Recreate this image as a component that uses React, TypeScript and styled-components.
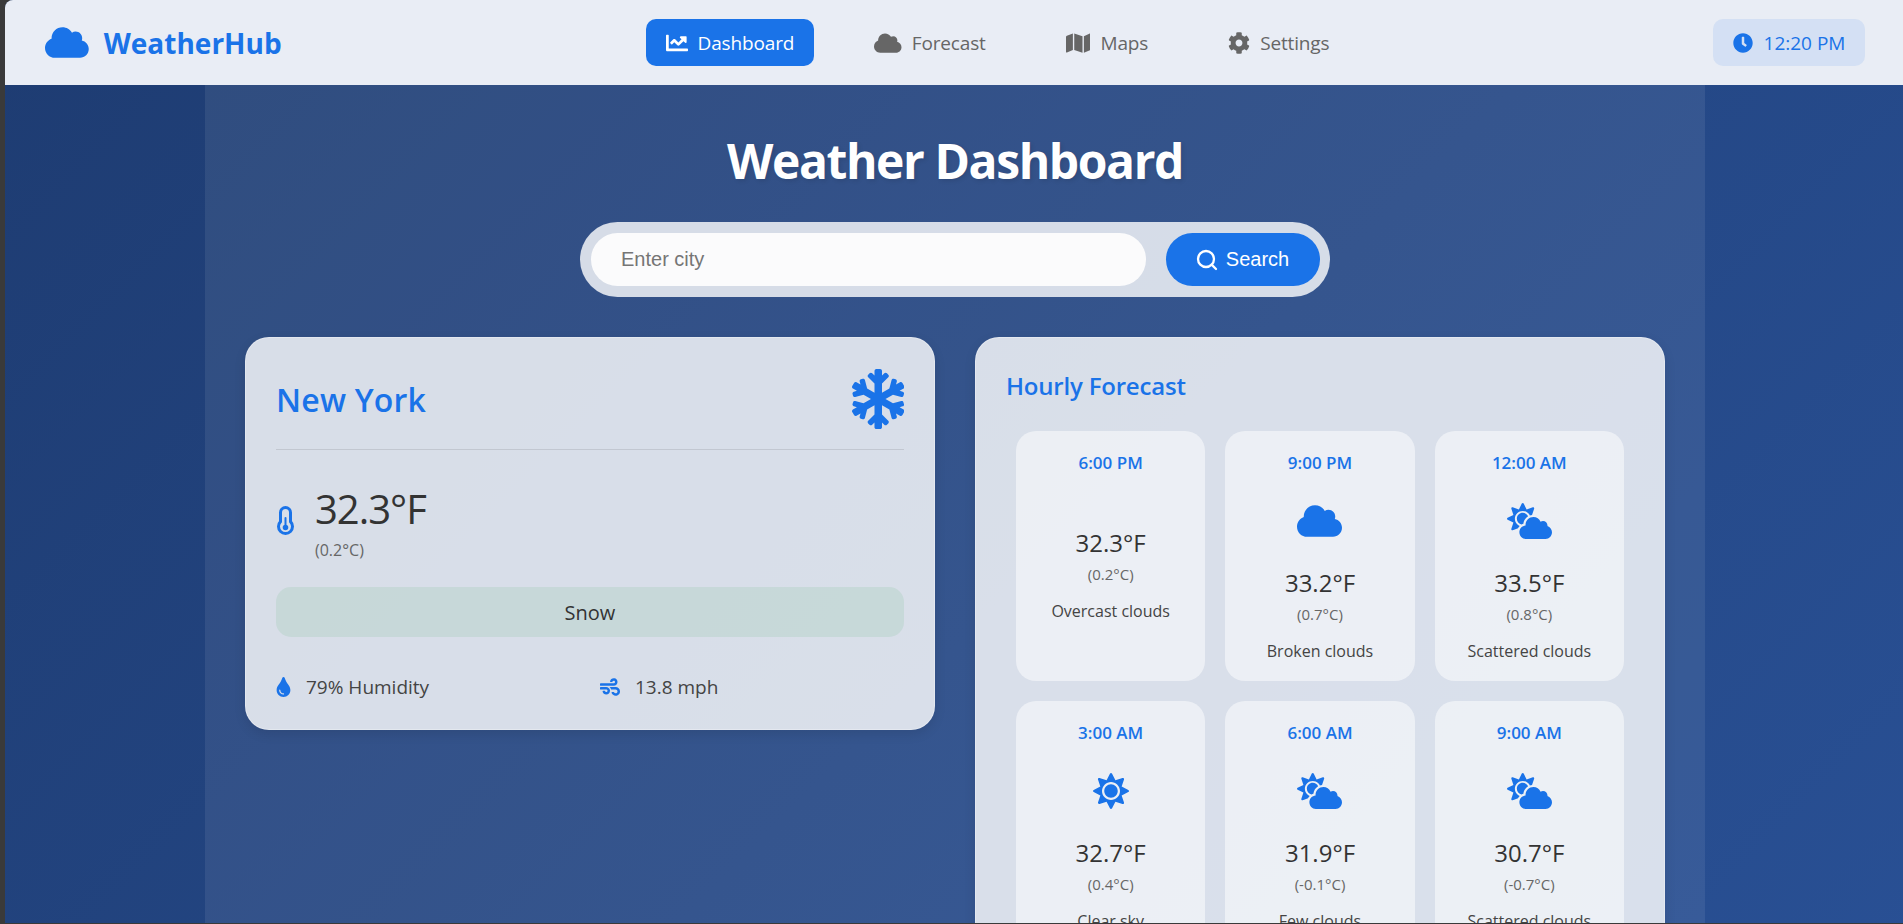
import styled, { createGlobalStyle } from "styled-components";
import {
  FaChartLine,
  FaClock,
  FaCloud,
  FaCloudSun,
  FaCog,
  FaMap,
  FaSnowflake,
  FaSun,
  FaTint,
  FaWind,
} from "react-icons/fa";
import { Search } from "lucide-react";

const GlobalStyle = createGlobalStyle`
  html, body {
    margin: 0;
    height: 100%;
    overflow: hidden;
    background: #3a3a3a;
  }
  * {
    box-sizing: border-box;
  }
  #root {
    height: 924px;
    padding: 0 0 1px 5px;
  }
`;

const blue = "#1a73e8";

// react-icons draws every glyph in a 1em square, the wide ones need their real width
const CloudIcon = styled(FaCloud)`
  width: 1.25em;
`;

const CloudSunIcon = styled(FaCloudSun)`
  width: 1.25em;
`;

const MapIcon = styled(FaMap)`
  width: 1.125em;
`;

const DropIcon = styled(FaTint)`
  width: 0.75em;
`;

const Page = styled.div`
  height: 100%;
  overflow: hidden;
  border-top-left-radius: 8px;
  font-family: "Open Sans", "Noto Sans", sans-serif;
  color: #333;
`;

const Backdrop = styled.div`
  min-height: 1300px;
  background: linear-gradient(135deg, #1e3c72, #2a5298);
`;

const Nav = styled.nav`
  height: 85px;
  padding: 0 38px 0 40px;
  display: flex;
  align-items: center;
  justify-content: space-between;
  background: #e9edf5;
`;

const Logo = styled.div`
  width: 237px;
  display: flex;
  align-items: center;
  gap: 15px;
  font-size: 28px;
  font-weight: 700;
  color: ${blue};

  svg {
    font-size: 35px;
  }
`;

const NavLinks = styled.div`
  display: flex;
  gap: 40px;
`;

const NavLink = styled.a<{ $active?: boolean }>`
  height: 47px;
  padding: 0 20px;
  display: flex;
  align-items: center;
  gap: 10px;
  border-radius: 10px;
  font-size: 19px;
  letter-spacing: -0.15px;
  color: ${({ $active }) => ($active ? "#fff" : "#666")};
  background: ${({ $active }) => ($active ? blue : "transparent")};

  svg {
    font-size: 22px;
  }
`;

const TimePill = styled.div`
  width: 152px;
  height: 47px;
  display: flex;
  align-items: center;
  justify-content: center;
  gap: 11px;
  border-radius: 10px;
  font-size: 19px;
  color: ${blue};
  background: rgba(26, 115, 232, 0.1);

  svg {
    font-size: 20px;
  }
`;

const Main = styled.main`
  width: 1500px;
  margin-left: calc(50% - 749px);
  padding: 42px 40px 40px;
  background: rgba(255, 255, 255, 0.08);
`;

const Title = styled.h1`
  margin: 0 0 28px;
  height: 67px;
  line-height: 67px;
  text-align: center;
  font-size: 48px;
  font-weight: 700;
  letter-spacing: -1.4px;
  color: #fff;
  text-shadow: 2px 2px 4px rgba(0, 0, 0, 0.1);
`;

const SearchBar = styled.form`
  width: 750px;
  height: 75px;
  margin: 0 auto 40px;
  padding: 11px 10px 11px 11px;
  display: flex;
  gap: 20px;
  border-radius: 38px;
  background: rgba(255, 255, 255, 0.8);
`;

const SearchInput = styled.input`
  flex: 1;
  min-width: 0;
  padding: 0 30px;
  border: none;
  outline: none;
  border-radius: 27px;
  font-family: "Liberation Sans", Arial, sans-serif;
  font-size: 20px;
  background: #fbfbfc;

  &::placeholder {
    color: #757575;
  }
`;

const SearchButton = styled.button`
  width: 154px;
  padding: 0 2px 0 0;
  display: flex;
  align-items: center;
  justify-content: center;
  gap: 7px;
  border: none;
  border-radius: 27px;
  font-family: "Liberation Sans", Arial, sans-serif;
  font-size: 20px;
  color: #fff;
  background: ${blue};
`;

const Columns = styled.div`
  display: grid;
  grid-template-columns: 1fr 1fr;
  gap: 40px;
  align-items: start;
`;

const Card = styled.section`
  padding: 30px;
  border-radius: 24px;
  border: 1px solid rgba(255, 255, 255, 0.3);
  background: rgba(255, 255, 255, 0.81);
  box-shadow: 0 4px 12px rgba(0, 0, 0, 0.1);
`;

const WeatherCard = styled(Card)`
  padding-bottom: 27px;
`;

const CardHeader = styled.div`
  height: 82px;
  margin-bottom: 30px;
  padding-bottom: 20px;
  display: flex;
  align-items: center;
  justify-content: space-between;
  border-bottom: 1px solid rgba(0, 0, 0, 0.1);
`;

const City = styled.h2`
  margin: 2px 0 0;
  font-size: 32px;
  font-weight: 600;
  letter-spacing: 0.2px;
  color: ${blue};
`;

const HeaderIcon = styled(FaSnowflake)`
  width: 0.875em;
  font-size: 60px;
  color: ${blue};
`;

const TempRow = styled.div`
  display: flex;
  align-items: center;
  gap: 21px;
  margin-bottom: 26px;
`;

const TempIcon = styled.svg`
  width: 17px;
  height: 30px;
  margin-left: 1px;
  fill: none;
  stroke: ${blue};
  stroke-linecap: round;
`;

const TempValue = styled.div`
  padding-top: 2px;
  font-size: 40px;
  font-weight: 500;
  line-height: 54px;
  letter-spacing: -1px;
`;

const TempSub = styled.div`
  margin-top: 3px;
  font-size: 16px;
  line-height: 22px;
  color: #666;
`;

const Condition = styled.div`
  height: 50px;
  margin-bottom: 35px;
  display: flex;
  align-items: center;
  justify-content: center;
  border-radius: 15px;
  font-size: 20px;
  background: rgba(52, 168, 83, 0.1);
`;

const Stats = styled.div`
  display: grid;
  grid-template-columns: 1fr 1fr;
  gap: 20px;
`;

const Stat = styled.div`
  height: 30px;
  display: flex;
  align-items: center;
  gap: 15px;
  font-size: 19px;
  color: #444;

  svg {
    font-size: 20px;
    color: ${blue};
  }
`;

const SectionTitle = styled.h3`
  margin: 1px 0 19px;
  height: 33px;
  line-height: 33px;
  font-size: 24px;
  font-weight: 600;
  letter-spacing: -0.2px;
  color: ${blue};
`;

const HourGrid = styled.div`
  display: grid;
  grid-template-columns: repeat(3, 1fr);
  gap: 20px;
  padding: 10px;
`;

const HourCard = styled.article`
  height: 250px;
  padding: 20px 10px;
  border-radius: 20px;
  text-align: center;
  background: rgba(255, 255, 255, 0.5);
`;

const HourTime = styled.div`
  height: 24px;
  line-height: 24px;
  font-size: 17px;
  font-weight: 600;
  color: ${blue};
`;

const HourIcon = styled.div<{ $empty?: boolean }>`
  height: ${({ $empty }) => ($empty ? "32px" : "72px")};
  margin-top: 10px;
  display: flex;
  align-items: center;
  justify-content: center;
  font-size: 36px;
  color: ${blue};
`;

const HourTemp = styled.div`
  margin-top: 11px;
  height: 30px;
  line-height: 30px;
  font-size: 24px;
  font-weight: 500;
`;

const HourSub = styled.div`
  margin-top: 6px;
  height: 20px;
  line-height: 20px;
  font-size: 15px;
  color: #666;
`;

const HourNote = styled.div`
  margin-top: 16px;
  line-height: 22px;
  font-size: 16px;
  color: #444;
`;

const hours = [
  { time: "6:00 PM", temp: "32.3°F", sub: "(0.2°C)", note: "Overcast clouds", icon: null },
  { time: "9:00 PM", temp: "33.2°F", sub: "(0.7°C)", note: "Broken clouds", icon: <CloudIcon /> },
  { time: "12:00 AM", temp: "33.5°F", sub: "(0.8°C)", note: "Scattered clouds", icon: <CloudSunIcon /> },
  { time: "3:00 AM", temp: "32.7°F", sub: "(0.4°C)", note: "Clear sky", icon: <FaSun /> },
  { time: "6:00 AM", temp: "31.9°F", sub: "(-0.1°C)", note: "Few clouds", icon: <CloudSunIcon /> },
  { time: "9:00 AM", temp: "30.7°F", sub: "(-0.7°C)", note: "Scattered clouds", icon: <CloudSunIcon /> },
];

export default function App() {
  return (
    <>
      <GlobalStyle />
      <Page>
        <Backdrop>
          <Nav>
            <Logo>
              <CloudIcon />
              WeatherHub
            </Logo>
            <NavLinks>
              <NavLink $active>
                <FaChartLine />
                Dashboard
              </NavLink>
              <NavLink>
                <CloudIcon />
                Forecast
              </NavLink>
              <NavLink>
                <MapIcon />
                Maps
              </NavLink>
              <NavLink>
                <FaCog />
                Settings
              </NavLink>
            </NavLinks>
            <TimePill>
              <FaClock />
              12:20 PM
            </TimePill>
          </Nav>
          <Main>
            <Title>Weather Dashboard</Title>
            <SearchBar onSubmit={(e) => e.preventDefault()}>
              <SearchInput placeholder="Enter city" />
              <SearchButton type="submit">
                <Search size={24} strokeWidth={2.3} />
                Search
              </SearchButton>
            </SearchBar>
            <Columns>
              <WeatherCard>
                <CardHeader>
                  <City>New York</City>
                  <HeaderIcon />
                </CardHeader>
                <TempRow>
                  <TempIcon viewBox="0 0 17 30">
                    <path strokeWidth="3" d="M3.5 6.5a5 5 0 0 1 10 0v9.1a7 7 0 1 1-10 0Z" />
                    <path strokeWidth="2" d="M8.5 12v9.5" />
                    <circle cx="8.5" cy="21.5" r="1.8" strokeWidth="2" fill={blue} />
                  </TempIcon>
                  <div>
                    <TempValue>32.3°F</TempValue>
                    <TempSub>(0.2°C)</TempSub>
                  </div>
                </TempRow>
                <Condition>Snow</Condition>
                <Stats>
                  <Stat>
                    <DropIcon />
                    79% Humidity
                  </Stat>
                  <Stat>
                    <FaWind />
                    13.8 mph
                  </Stat>
                </Stats>
              </WeatherCard>
              <Card>
                <SectionTitle>Hourly Forecast</SectionTitle>
                <HourGrid>
                  {hours.map((h) => (
                    <HourCard key={h.time}>
                      <HourTime>{h.time}</HourTime>
                      <HourIcon $empty={!h.icon}>{h.icon}</HourIcon>
                      <HourTemp>{h.temp}</HourTemp>
                      <HourSub>{h.sub}</HourSub>
                      <HourNote>{h.note}</HourNote>
                    </HourCard>
                  ))}
                </HourGrid>
              </Card>
            </Columns>
          </Main>
        </Backdrop>
      </Page>
    </>
  );
}
